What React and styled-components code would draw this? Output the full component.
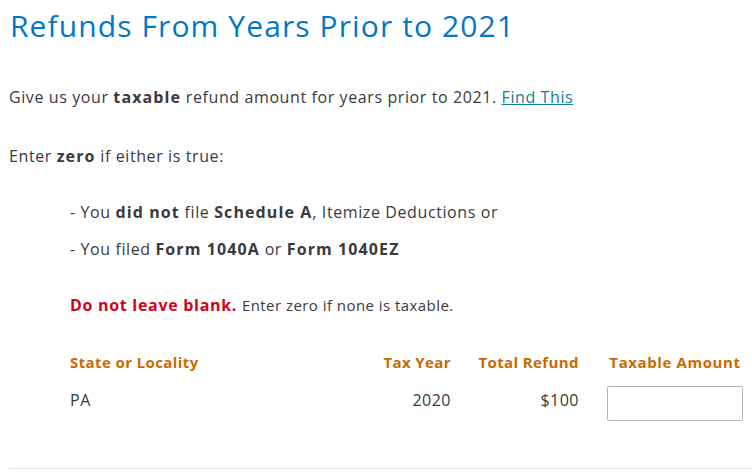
import React from "react";
import styled, { createGlobalStyle } from "styled-components";

const Global = createGlobalStyle`
  html, body { margin: 0; padding: 0; background: #fff; }
  body { font-family: "Open Sans", "Noto Sans", sans-serif; color: #393a3d; }
`;

const Page = styled.div`
  padding: 4px 0 0 9px;
  width: 743px;
  box-sizing: border-box;
`;

const Title = styled.h1`
  margin: 0 0 0 1px;
  font-size: 30px;
  font-weight: 400;
  letter-spacing: 1.1px;
  color: #0077c5;
  line-height: 44px;
`;

const Para = styled.p`
  margin: ${(p) => p.$mt || 0}px 0 0 ${(p) => p.$ml || 0}px;
  font-size: 16px;
  letter-spacing: 0.6px;
  line-height: 24px;
  color: #393a3d;
`;

const Small = styled.span`
  font-size: 15px;
  letter-spacing: 0.45px;
`;

const Strong = styled.b`
  font-weight: 700;
  letter-spacing: 1.1px;
`;

const Link = styled.a`
  color: #0d8298;
  text-decoration: underline;
  cursor: pointer;
`;

const Warn = styled.b`
  color: #d0021b;
  font-weight: 700;
  letter-spacing: 0.7px;
`;

const Grid = styled.div`
  margin: 33px 0 0 61px;
  display: grid;
  grid-template-columns: 1fr 100px 128px 164px;
  align-items: start;
  row-gap: 12px;
`;

const Head = styled.div`
  font-size: 15px;
  font-weight: 700;
  letter-spacing: 0.4px;
  color: #c96a00;
  text-align: ${(p) => p.$align || "left"};
  line-height: 24px;
`;

const HeadBox = styled(Head)`
  justify-self: end;
  width: 136px;
  text-align: center;
  letter-spacing: 0.6px;
`;

const Cell = styled.div`
  margin-top: 2px;
  font-size: 16px;
  letter-spacing: 0.5px;
  color: #393a3d;
  text-align: ${(p) => p.$align || "left"};
  line-height: 24px;
`;

const Input = styled.input`
  justify-self: end;
  width: 136px;
  height: 35px;
  box-sizing: border-box;
  border: 1px solid #b4b4b4;
  border-radius: 2px;
  margin: 0;
  font: inherit;
`;

const Rule = styled.hr`
  margin: 47px 0 0 0;
  border: 0;
  border-top: 1px solid #e4e4e4;
  width: 760px;
`;

export default function App() {
  return (
    <Page>
      <Global />
      <Title>Refunds From Years Prior to 2021</Title>
      <Para $mt={37}>
        Give us your <Strong>taxable</Strong> refund amount for years prior to 2021. <Link>Find This</Link>
      </Para>
      <Para $mt={35}>
        Enter <Strong>zero</Strong> if either is true:
      </Para>
      <Para $mt={32} $ml={61}>
        - You <Strong>did not</Strong> file <Strong>Schedule A</Strong>, Itemize Deductions or
      </Para>
      <Para $mt={13} $ml={61}>
        - You filed <Strong>Form 1040A</Strong> or <Strong>Form 1040EZ</Strong>
      </Para>
      <Para $mt={32} $ml={61}>
        <Warn>Do not leave blank.</Warn> <Small>Enter zero if none is taxable.</Small>
      </Para>
      <Grid>
        <Head>State or Locality</Head>
        <Head $align="right">Tax Year</Head>
        <Head $align="right">Total Refund</Head>
        <HeadBox>Taxable Amount</HeadBox>
        <Cell>PA</Cell>
        <Cell $align="right">2020</Cell>
        <Cell $align="right">$100</Cell>
        <Input aria-label="Taxable Amount" />
      </Grid>
      <Rule />
    </Page>
  );
}
